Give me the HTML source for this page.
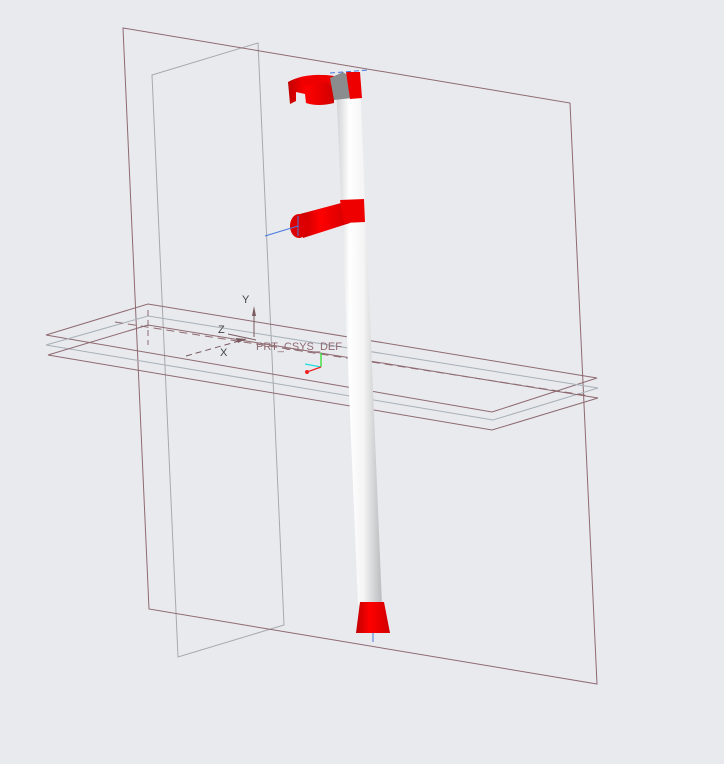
<!DOCTYPE html>
<html><head><style>
html,body{margin:0;padding:0;background:#e8eaee;}
svg{display:block}
</style></head><body>
<svg width="724" height="764" viewBox="0 0 724 764" xmlns="http://www.w3.org/2000/svg">
<defs>
<linearGradient id="pole" x1="0" x2="1" y1="0" y2="0">
<stop offset="0" stop-color="#cfd1d3"/><stop offset="0.3" stop-color="#ffffff"/><stop offset="0.6" stop-color="#f4f4f4"/><stop offset="1" stop-color="#b9bbbd"/>
</linearGradient>
<linearGradient id="red" x1="0" x2="1" y1="0" y2="0">
<stop offset="0" stop-color="#c00000"/><stop offset="0.4" stop-color="#ff0000"/><stop offset="1" stop-color="#d00000"/>
</linearGradient>
</defs>
<rect width="724" height="764" fill="#e8eaee"/>
<polygon points="152,75 258,43 284,625 178,657" fill="none" stroke="#a7a9ae" stroke-width="1"/>
<polygon points="123,28 570,103 597,684 149,609" fill="none" stroke="#8e6a70" stroke-width="1"/>
<polygon points="46,335 148,304 597,378 492,412" fill="none" stroke="#8e6a70" stroke-width="1"/>
<polygon points="46,345 148,316 598,388 493,420" fill="none" stroke="#a8b0b8" stroke-width="1"/>
<polygon points="48,355 148,325 598,398 492,430" fill="none" stroke="#8e6a70" stroke-width="1"/>
<line x1="115" y1="322" x2="590" y2="396" stroke="#8e6a70" stroke-dasharray="8,5"/>
<line x1="148" y1="310" x2="148" y2="345" stroke="#8e6a70" stroke-dasharray="6,4"/>
<line x1="254" y1="337" x2="254" y2="310" stroke="#7a5a5e"/>
<polygon points="252,316 254,306 256,316" fill="#7a5a5e"/>
<line x1="228" y1="334" x2="256" y2="340" stroke="#7a5a5e"/>
<line x1="186" y1="356" x2="246" y2="339" stroke="#7a5a5e" stroke-dasharray="6,4"/>
<polygon points="236,338 246,339 238,343" fill="#7a5a5e"/>
<text x="242" y="303" font-family="Liberation Sans,sans-serif" font-size="11" fill="#444">Y</text>
<text x="218" y="333" font-family="Liberation Sans,sans-serif" font-size="11" fill="#444">Z</text>
<text x="220" y="356" font-family="Liberation Sans,sans-serif" font-size="11" fill="#444">X</text>
<text x="256" y="350" font-family="Liberation Sans,sans-serif" font-size="11" fill="#8e6a70">PRT_CSYS_DEF</text>
<line x1="321" y1="367" x2="321" y2="353" stroke="#22dd22" stroke-width="1.2"/>
<line x1="321" y1="367" x2="305" y2="364" stroke="#22dddd" stroke-width="1.2"/>
<line x1="321" y1="367" x2="307" y2="372" stroke="#ee2222" stroke-width="1.2"/>
<circle cx="307" cy="372" r="2" fill="#ee2222"/>
<!-- pole -->
<polygon points="336,80 360,80 382,605 358,605" fill="url(#pole)"/>
<!-- top cuff -->
<path d="M288,82 Q306,72 334,76 L334,103 Q318,107 306,103 L305,94 L296,92 L296,101 L290,104 Z" fill="url(#red)"/>
<path d="M300,80 Q316,73 334,76 L334,84 Q318,80 306,86 Z" fill="#ee0000"/>
<polygon points="330,78 343,72 354,80 352,98 334,100" fill="#8a8c8e"/>
<polygon points="346,72 360,72 362,98 350,99" fill="#ee0000"/>
<line x1="330" y1="73" x2="368" y2="70" stroke="#4a78e0" stroke-dasharray="5,3"/>
<!-- handle -->
<polygon points="300,214 345,202 350,223 303,238" fill="url(#red)"/>
<polygon points="340,200 364,199 365,222 344,223" fill="#ee0000"/>
<ellipse cx="299" cy="226" rx="9" ry="12" fill="#dd0000"/>
<line x1="265" y1="236" x2="298" y2="226" stroke="#4a78e0"/>
<line x1="298" y1="216" x2="298" y2="236" stroke="#4a78e0"/>
<!-- tip -->
<polygon points="360,602 384,602 390,633 356,633" fill="url(#red)"/>
<line x1="373" y1="633" x2="373" y2="642" stroke="#4a78e0"/>
</svg>
</body></html>
